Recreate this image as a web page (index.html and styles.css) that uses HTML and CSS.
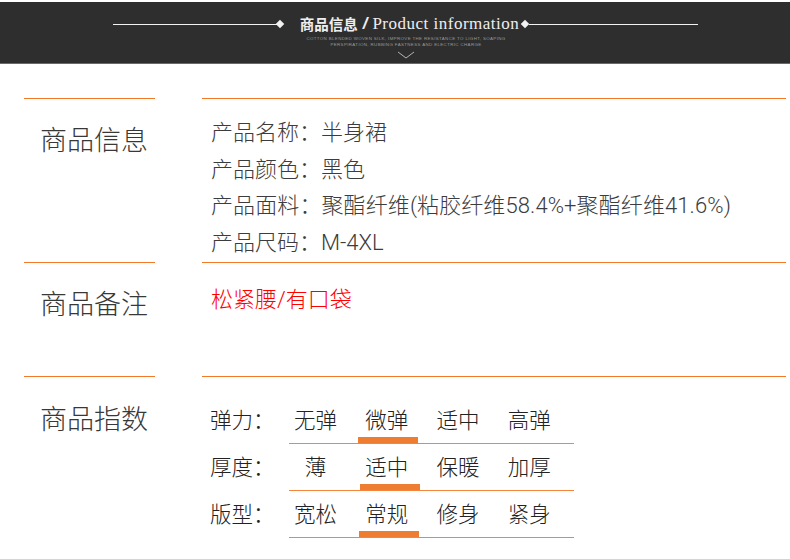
FILE: index.html
```html
<!DOCTYPE html>
<html lang="zh">
<head>
<meta charset="utf-8">
<title>商品信息</title>
<link rel="stylesheet" href="styles.css">
</head>
<body>
<header class="banner">
  <div class="banner-row">
    <span class="rule"></span><span class="diamond"></span>
    <h1 class="banner-title"><span class="cn">商品信息</span><span class="slash">/</span><span class="en">Product information</span></h1>
    <span class="diamond"></span><span class="rule rule-right"></span>
  </div>
  <p class="banner-sub">COTTON BLENDED WOVEN SILK, IMPROVE THE RESISTANCE TO LIGHT, SOAPING<br>PERSPIRATION, RUBBING FASTNESS AND ELECTRIC CHARGE</p>
  <svg class="chevron" width="18" height="8" viewBox="0 0 18 8"><path d="M1 1 L9 7 L17 1" fill="none" stroke="#b5b5b5" stroke-width="1"/></svg>
</header>
<main class="content">
  <section class="section section-info">
    <h2 class="section-title">商品信息</h2>
    <div class="section-body">
      <p class="line">产品名称：半身裙</p>
      <p class="line">产品颜色：黑色</p>
      <p class="line line-long">产品面料：聚酯纤维(粘胶纤维58.4%+聚酯纤维41.6%)</p>
      <p class="line">产品尺码：M-4XL</p>
    </div>
  </section>
  <section class="section section-note">
    <h2 class="section-title">商品备注</h2>
    <div class="section-body">
      <p class="line note">松紧腰/有口袋</p>
    </div>
  </section>
  <section class="section section-index">
    <h2 class="section-title">商品指数</h2>
    <div class="section-body specs">
      <div class="spec spec-a">
        <span class="spec-label">弹力：</span>
        <div class="spec-options">
          <span class="opt">无弹</span><span class="opt on">微弹</span><span class="opt">适中</span><span class="opt">高弹</span>
        </div>
      </div>
      <div class="spec spec-b">
        <span class="spec-label">厚度：</span>
        <div class="spec-options">
          <span class="opt">薄</span><span class="opt on">适中</span><span class="opt">保暖</span><span class="opt">加厚</span>
        </div>
      </div>
      <div class="spec spec-c">
        <span class="spec-label">版型：</span>
        <div class="spec-options">
          <span class="opt">宽松</span><span class="opt on">常规</span><span class="opt">修身</span><span class="opt">紧身</span>
        </div>
      </div>
    </div>
  </section>
</main>
</body>
</html>
```
FILE: styles.css
```css
* { box-sizing: border-box; }
html, body { margin: 0; padding: 0; }
body {
  width: 790px;
  height: 559px;
  overflow: hidden;
  background: #fff;
  font-family: Roboto, "Noto Sans CJK SC", "Noto Sans", sans-serif;
  font-weight: 300;
  color: #333;
}
h1, h2, p { margin: 0; font-weight: 300; }

.banner {
  margin-top: 2px;
  height: 62px;
  background: #2e2e2e;
  border-bottom: 1px solid #6a6a6a;
  display: flex;
  flex-direction: column;
  align-items: center;
}
.banner-row {
  display: flex;
  align-items: center;
  margin-top: 11px;
  height: 22px;
  padding-left: 21px;
}
.rule { width: 165px; height: 1px; background: #f2f2f2; }
.rule-right { width: 169px; }
.diamond { width: 6px; height: 6px; background: #f2f2f2; transform: rotate(45deg); margin: 0 1px 0 -1px; }
.banner-title {
  display: flex;
  align-items: center;
  margin: 0 4px 0 16px;
  color: #eee;
  line-height: 22px;
  white-space: nowrap;
}
.cn { font-family: "Noto Sans CJK SC", sans-serif; font-size: 14.5px; font-weight: 700; }
.slash { font-family: "Liberation Sans", sans-serif; font-size: 17px; font-weight: 700; margin: 0 5px 0 5px; font-style: italic; }
.en { font-family: "Liberation Serif", serif; font-size: 17px; letter-spacing: 0.5px; }
.banner-sub {
  font-family: "Liberation Sans", sans-serif;
  font-size: 4.4px;
  line-height: 6px;
  letter-spacing: 0.38px;
  color: #999;
  text-align: center;
  margin-top: 1px;
  padding-left: 22px;
}
.chevron { display: block; margin-top: 3px; margin-left: 22px; }

.content { margin-top: 34px; padding: 0 4px 0 24px; }
.section {
  display: grid;
  grid-template-columns: 131px 584px;
  column-gap: 47px;
}
.section-title,
.section-body { border-top: 1px solid #f07a28; }
.section-info { height: 164px; }
.section-note { height: 114px; }
.section-title {
  font-size: 27px;
  line-height: 38px;
  padding: 23px 0 0 16px;
  color: #383838;
}
.section-index .section-title { padding-top: 24px; }
.section-body { padding-left: 9px; }
.section-info .section-body { padding-top: 16px; }
.section-note .section-body { padding-top: 19px; }
.line {
  font-size: 22px;
  line-height: 36.7px;
  white-space: nowrap;
  color: #3c3c3c;
}
.line-long { letter-spacing: 0.1px; }
.note { color: #ff0000; line-height: 36px; }

.specs { padding-top: 22px; display: flex; flex-direction: column; }
.spec { display: flex; align-items: stretch; height: 47px; color: #222; }
.spec-label { width: 78px; font-size: 21.5px; line-height: 44px; margin-left: -1px; margin-right: 1px; }
.spec-options {
  width: 285px;
  height: 45px;
  display: flex;
  border-bottom: 1px solid #f4853c;
}
.spec-c .spec-options { height: 44.5px; }
.opt {
  width: 72.3px;
  font-size: 21.5px;
  line-height: 44px;
  text-align: center;
  position: relative;
  left: -9px;
}
.opt.on::after {
  content: "";
  position: absolute;
  width: 60px;
  bottom: 0;
  height: 6px;
  background: #ee7d31;
}
.spec-a .opt.on::after { left: 7px; }
.spec-b .opt.on::after { left: 9px; }
.spec-c .opt.on::after { left: 8px; }
```
